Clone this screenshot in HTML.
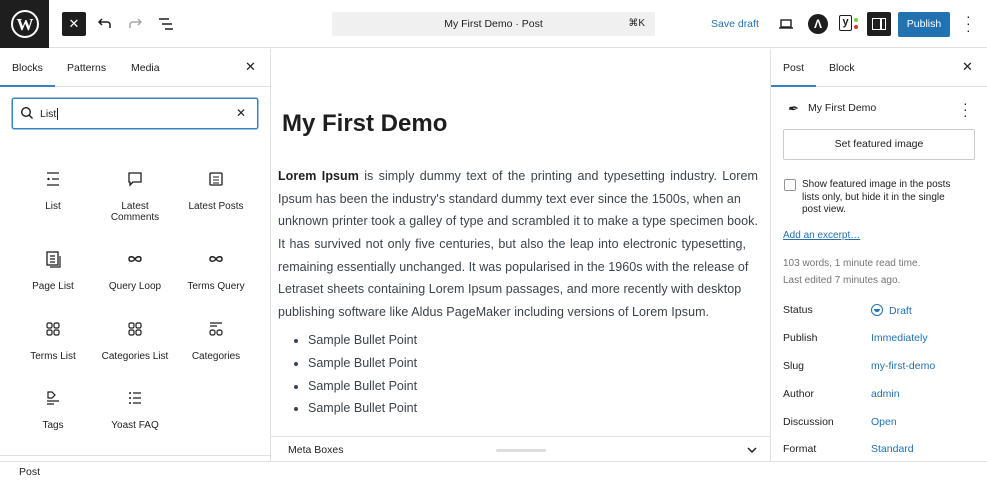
<!DOCTYPE html>
<html><head><meta charset="utf-8"><style>
*{box-sizing:border-box;margin:0;padding:0}
body{width:987px;height:481px;overflow:hidden;background:#fff;font-family:"Liberation Sans",sans-serif;color:#1e1e1e;position:relative;font-size:10.5px}
.abs{position:absolute}
.top{left:0;top:0;width:987px;height:48px;border-bottom:1px solid #e0e0e0}
.wp{left:0;top:0;width:49px;height:48px;background:#1e1e1e;display:flex;align-items:center;justify-content:center}
.blue{color:#2271b1}
.lbl{font-size:10px;text-align:center;width:80px;color:#1e1e1e;line-height:11px}
.row{position:absolute;left:783px;font-size:10.5px}
.val{position:absolute;left:871px;color:#2271b1;font-size:10.5px}
.para div{white-space:nowrap;text-align:justify;text-align-last:justify;height:22.7px}
</style></head><body>
<div class="abs top"></div>
<div class="abs wp"><svg width="30" height="30" viewBox="0 0 30 30"><circle cx="15" cy="15" r="13" fill="none" stroke="#fff" stroke-width="2"/><text x="15" y="21" font-size="17" font-family="Liberation Serif" font-weight="bold" fill="#fff" text-anchor="middle">W</text></svg></div>
<div class="abs" style="left:62px;top:12px;width:24px;height:24px;background:#1e1e1e;border-radius:2px;color:#fff;text-align:center;line-height:24px;font-size:13px">✕</div>
<svg class="abs" style="left:96px;top:15px" width="18" height="18" viewBox="0 0 18 18"><path d="M6 4 L3 7 L6 10 M3 7 H11 Q14 7 14 10 V13" fill="none" stroke="#1e1e1e" stroke-width="1.5"/></svg>
<svg class="abs" style="left:126px;top:15px" width="18" height="18" viewBox="0 0 18 18"><path d="M12 4 L15 7 L12 10 M15 7 H7 Q4 7 4 10 V13" fill="none" stroke="#aaa" stroke-width="1.5"/></svg>
<svg class="abs" style="left:157px;top:15px" width="18" height="18" viewBox="0 0 18 18"><path d="M2 4H12M5 9H15M8 14H16" stroke="#1e1e1e" stroke-width="1.5"/></svg>
<div class="abs" style="left:332px;top:12px;width:323px;height:24px;background:#f0f0f0;border-radius:2px;font-size:10.5px;line-height:24px;text-align:center">My First Demo · Post<span style="position:absolute;right:10px;font-size:10px">⌘K</span></div>
<div class="abs blue" style="left:711px;top:18px;font-size:10.5px">Save draft</div>
<svg class="abs" style="left:777px;top:15px" width="18" height="18" viewBox="0 0 18 18"><rect x="4" y="5" width="10" height="7" fill="none" stroke="#1e1e1e" stroke-width="1.4"/><path d="M2 13H16" stroke="#1e1e1e" stroke-width="1.4"/></svg>
<div class="abs" style="left:808px;top:14px;width:20px;height:20px;border-radius:50%;background:#1e1e1e;color:#fff;font-size:12px;font-weight:bold;text-align:center;line-height:20px">Λ</div>
<div class="abs" style="left:839px;top:15px;width:13px;height:16px;border:1.5px solid #1e1e1e;border-radius:2px;font-size:11px;line-height:13px;text-align:center;font-weight:bold">y</div>
<div class="abs" style="left:854px;top:18px;width:4px;height:4px;border-radius:50%;background:#7ad03a"></div>
<div class="abs" style="left:854px;top:25px;width:4px;height:4px;border-radius:50%;background:#dc3232"></div>
<div class="abs" style="left:867px;top:12px;width:24px;height:24px;background:#1e1e1e;border-radius:2px"><div style="position:absolute;left:5px;top:6px;width:14px;height:12px;border:1.5px solid #fff"></div><div style="position:absolute;left:13px;top:6px;width:1.5px;height:12px;background:#fff"></div></div>
<div class="abs" style="left:898px;top:12px;width:52px;height:25px;background:#2271b1;border-radius:2px;color:#fff;font-size:10.5px;text-align:center;line-height:25px">Publish</div>
<div class="abs" style="left:966px;top:13px;font-size:14px;line-height:7px;width:4px;text-align:center">·<br>·<br>·</div>

<div class="abs" style="left:0;top:49px;width:271px;height:412px;border-right:1px solid #e0e0e0"></div>
<div class="abs" style="left:0;top:86px;width:270px;height:1px;background:#e0e0e0"></div>
<div class="abs" style="left:0;top:85px;width:55px;height:2px;background:#3582c4"></div>
<div class="abs" style="left:12px;top:62px">Blocks</div>
<div class="abs" style="left:67px;top:62px">Patterns</div>
<div class="abs" style="left:131px;top:62px">Media</div>
<div class="abs" style="left:245px;top:59px;font-size:13px">✕</div>
<div class="abs" style="left:12px;top:98px;width:246px;height:31px;border:1px solid #3582c4;border-radius:2px;box-shadow:0 0 0 .5px #3582c4"></div>
<svg class="abs" style="left:20px;top:106px" width="14" height="14" viewBox="0 0 14 14"><circle cx="6" cy="6" r="4.3" fill="none" stroke="#1e1e1e" stroke-width="1.4"/><path d="M9 9L12.5 12.5" stroke="#1e1e1e" stroke-width="1.5"/></svg>
<div class="abs" style="left:40px;top:108px">List<span style="border-left:1px solid #1e1e1e;margin-left:1px"></span></div>
<div class="abs" style="left:236px;top:106px;font-size:12px">✕</div>

<svg class="abs" style="left:44px;top:170px" width="18" height="18" viewBox="0 0 18 18"><path d="M3 3H15M8 9H15M3 15H15" stroke="#1e1e1e" stroke-width="1.3"/><circle cx="4.5" cy="9" r="1.2" fill="#1e1e1e"/></svg>
<div class="abs lbl" style="left:13px;top:201px">List</div>
<svg class="abs" style="left:126px;top:170px" width="18" height="18" viewBox="0 0 18 18"><path d="M3 3H15V12H7L4 15V12H3Z" fill="none" stroke="#1e1e1e" stroke-width="1.3"/></svg>
<div class="abs lbl" style="left:95px;top:201px">Latest<br>Comments</div>
<svg class="abs" style="left:207px;top:170px" width="18" height="18" viewBox="0 0 18 18"><rect x="3" y="3" width="12" height="12" rx="1" fill="none" stroke="#1e1e1e" stroke-width="1.3"/><path d="M6 7H12M6 10H12M6 13H12" stroke="#1e1e1e" stroke-width="1"/></svg>
<div class="abs lbl" style="left:176px;top:201px">Latest Posts</div>

<svg class="abs" style="left:44px;top:250px" width="18" height="18" viewBox="0 0 18 18"><rect x="3" y="2" width="11" height="13" fill="none" stroke="#1e1e1e" stroke-width="1.3"/><path d="M6 6H11M6 9H11M6 12H11M16 6V17H6" stroke="#1e1e1e" stroke-width="1.2" fill="none"/></svg>
<div class="abs lbl" style="left:13px;top:281px">Page List</div>
<svg class="abs" style="left:126px;top:250px" width="18" height="18" viewBox="0 0 18 18"><path d="M9 9C7 6 3 6 3 9S7 12 9 9S15 6 15 9S11 12 9 9" fill="none" stroke="#1e1e1e" stroke-width="1.4"/></svg>
<div class="abs lbl" style="left:95px;top:281px">Query Loop</div>
<svg class="abs" style="left:207px;top:250px" width="18" height="18" viewBox="0 0 18 18"><path d="M9 9C7 6 3 6 3 9S7 12 9 9S15 6 15 9S11 12 9 9" fill="none" stroke="#1e1e1e" stroke-width="1.4"/></svg>
<div class="abs lbl" style="left:176px;top:281px">Terms Query</div>

<svg class="abs" style="left:44px;top:320px" width="18" height="18" viewBox="0 0 18 18"><rect x="3" y="3" width="5" height="5" rx="1.5" fill="none" stroke="#1e1e1e" stroke-width="1.2"/><rect x="10" y="3" width="5" height="5" rx="1.5" fill="none" stroke="#1e1e1e" stroke-width="1.2"/><rect x="3" y="10" width="5" height="5" rx="1.5" fill="none" stroke="#1e1e1e" stroke-width="1.2"/><rect x="10" y="10" width="5" height="5" rx="1.5" fill="none" stroke="#1e1e1e" stroke-width="1.2"/></svg>
<div class="abs lbl" style="left:13px;top:351px">Terms List</div>
<svg class="abs" style="left:126px;top:320px" width="18" height="18" viewBox="0 0 18 18"><rect x="3" y="3" width="5" height="5" rx="1.5" fill="none" stroke="#1e1e1e" stroke-width="1.2"/><rect x="10" y="3" width="5" height="5" rx="1.5" fill="none" stroke="#1e1e1e" stroke-width="1.2"/><rect x="3" y="10" width="5" height="5" rx="1.5" fill="none" stroke="#1e1e1e" stroke-width="1.2"/><rect x="10" y="10" width="5" height="5" rx="1.5" fill="none" stroke="#1e1e1e" stroke-width="1.2"/></svg>
<div class="abs lbl" style="left:95px;top:351px">Categories List</div>
<svg class="abs" style="left:207px;top:320px" width="18" height="18" viewBox="0 0 18 18"><path d="M3 3H15M3 6H10" stroke="#1e1e1e" stroke-width="1.2"/><rect x="3" y="10" width="5" height="5" rx="2" fill="none" stroke="#1e1e1e" stroke-width="1.2"/><rect x="10" y="10" width="5" height="5" rx="2" fill="none" stroke="#1e1e1e" stroke-width="1.2"/></svg>
<div class="abs lbl" style="left:176px;top:351px">Categories</div>

<svg class="abs" style="left:44px;top:389px" width="18" height="18" viewBox="0 0 18 18"><path d="M4 3H8L11 6L8 9H4Z" fill="none" stroke="#1e1e1e" stroke-width="1.2"/><path d="M3 12H15M3 15H10" stroke="#1e1e1e" stroke-width="1.2"/></svg>
<div class="abs lbl" style="left:13px;top:420px">Tags</div>
<svg class="abs" style="left:126px;top:389px" width="18" height="18" viewBox="0 0 18 18"><path d="M7 4H15M7 9H15M7 14H15" stroke="#1e1e1e" stroke-width="1.2"/><circle cx="4" cy="4" r="1" fill="#1e1e1e"/><circle cx="4" cy="9" r="1" fill="#1e1e1e"/><circle cx="4" cy="14" r="1" fill="#1e1e1e"/></svg>
<div class="abs lbl" style="left:95px;top:420px">Yoast FAQ</div>
<div class="abs" style="left:0;top:455px;width:270px;height:1px;background:#e0e0e0"></div>

<div class="abs" style="left:282px;top:110px;font-size:24px;font-weight:bold;color:#1e1e1e">My First Demo</div>
<div class="abs para" style="left:278px;top:165px;font-size:12.5px;letter-spacing:0.05px;line-height:22.7px;color:#3c434a">
<div style="width:480px"><b style="color:#1e1e1e">Lorem Ipsum</b> is simply dummy text of the printing and typesetting industry. Lorem</div>
<div style="width:462px">Ipsum has been the industry's standard dummy text ever since the 1500s, when an</div>
<div style="width:480px">unknown printer took a galley of type and scrambled it to make a type specimen book.</div>
<div style="width:468px">It has survived not only five centuries, but also the leap into electronic typesetting,</div>
<div style="width:468px">remaining essentially unchanged. It was popularised in the 1960s with the release of</div>
<div style="width:460px">Letraset sheets containing Lorem Ipsum passages, and more recently with desktop</div>
<div style="width:428px">publishing software like Aldus PageMaker including versions of Lorem Ipsum.</div>
</div>
<ul class="abs" style="left:308px;top:329px;font-size:12.5px;line-height:22.8px;color:#3c434a;list-style:disc">
<li>Sample Bullet Point</li><li>Sample Bullet Point</li><li>Sample Bullet Point</li><li>Sample Bullet Point</li></ul>
<div class="abs" style="left:271px;top:436px;width:499px;height:1px;background:#e0e0e0"></div>
<div class="abs" style="left:288px;top:444px;font-size:10.5px">Meta Boxes</div>
<div class="abs" style="left:496px;top:449px;width:50px;height:3px;background:#ddd;border-radius:2px"></div>
<svg class="abs" style="left:746px;top:445px" width="12" height="10" viewBox="0 0 12 10"><path d="M2 3L6 7L10 3" fill="none" stroke="#1e1e1e" stroke-width="1.5"/></svg>

<div class="abs" style="left:770px;top:49px;width:1px;height:412px;background:#e0e0e0"></div>
<div class="abs" style="left:771px;top:86px;width:216px;height:1px;background:#e0e0e0"></div>
<div class="abs" style="left:771px;top:85px;width:45px;height:2px;background:#3582c4"></div>
<div class="abs" style="left:783px;top:62px">Post</div>
<div class="abs" style="left:829px;top:62px">Block</div>
<div class="abs" style="left:962px;top:59px;font-size:13px">✕</div>
<div class="abs" style="left:787px;top:101px;font-size:13px;font-style:italic">✒</div>
<div class="abs" style="left:808px;top:102px;font-size:10.5px">My First Demo</div>
<div class="abs" style="left:963px;top:100px;font-size:14px;line-height:6px">·<br>·<br>·</div>
<div class="abs" style="left:783px;top:129px;width:192px;height:31px;border:1px solid #ccc;border-radius:2px;text-align:center;line-height:29px;font-size:10.5px">Set featured image</div>
<div class="abs" style="left:784px;top:179px;width:12px;height:12px;border:1px solid #949494;border-radius:2px"></div>
<div class="abs" style="left:802px;top:179px;width:150px;font-size:10px;line-height:12.5px">Show featured image in the posts lists only, but hide it in the single post view.</div>
<div class="abs" style="left:783px;top:230px;color:#2271b1;text-decoration:underline;font-size:10px">Add an excerpt…</div>
<div class="abs" style="left:783px;top:256px;color:#757575;font-size:10px;line-height:16.5px">103 words, 1 minute read time.<br>Last edited 7 minutes ago.</div>
<div class="row" style="top:304px">Status</div><div class="val" style="top:304px"><span style="display:inline-block;width:12px;height:12px;border:1.3px solid #2271b1;border-radius:50%;vertical-align:-2px;margin-right:6px;position:relative"><span style="position:absolute;left:2px;top:4px;width:6px;height:3px;background:#2271b1;border-radius:0 0 3px 3px"></span></span>Draft</div>
<div class="row" style="top:332px">Publish</div><div class="val" style="top:332px">Immediately</div>
<div class="row" style="top:360px">Slug</div><div class="val" style="top:360px">my-first-demo</div>
<div class="row" style="top:388px">Author</div><div class="val" style="top:388px">admin</div>
<div class="row" style="top:416px">Discussion</div><div class="val" style="top:416px">Open</div>
<div class="row" style="top:443px">Format</div><div class="val" style="top:443px">Standard</div>

<div class="abs" style="left:0;top:461px;width:987px;height:20px;border-top:1px solid #e0e0e0;background:#fff"></div>
<div class="abs" style="left:19px;top:466px;font-size:10.5px">Post</div>
</body></html>
